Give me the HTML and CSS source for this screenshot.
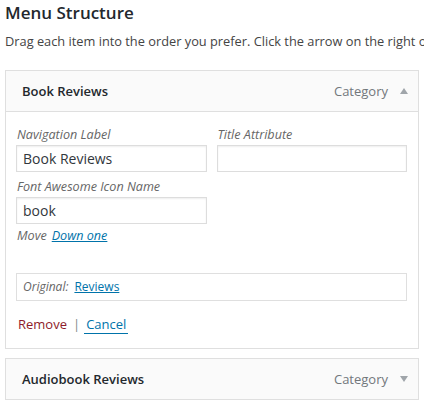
FILE: index.html
```html
<!DOCTYPE html>
<html>
<head>
<meta charset="utf-8">
<link rel="stylesheet" href="styles.css">
</head>
<body>
<h3 class="title">Menu Structure</h3>
<p class="intro">Drag each item into the order you prefer. Click the arrow on the right of the item to reveal additional configuration options.</p>

<div class="item">
  <div class="handle">
    <span class="item-title">Book Reviews</span>
    <span class="controls"><span class="type">Category</span><span class="arrow up"></span></span>
  </div>
  <div class="settings">
    <div class="row">
      <div class="field">
        <label class="label">Navigation Label</label>
        <div class="input">Book Reviews</div>
      </div>
      <div class="field">
        <label class="label">Title Attribute</label>
        <div class="input"></div>
      </div>
    </div>
    <div class="field half">
      <label class="label">Font Awesome Icon Name</label>
      <div class="input">book</div>
    </div>
    <div class="move"><span class="move-label">Move</span><a class="link">Down one</a></div>
    <div class="original"><span class="orig-label">Original:</span><a class="link">Reviews</a></div>
    <div class="actions"><a class="remove">Remove</a><span class="sep">|</span><a class="cancel">Cancel</a></div>
  </div>
</div>

<div class="item">
  <div class="handle closed">
    <span class="item-title">Audiobook Reviews</span>
    <span class="controls"><span class="type">Category</span><span class="arrow down"></span></span>
  </div>
</div>
</body>
</html>
```

FILE: styles.css
```css
* { box-sizing: border-box; }
html, body { margin: 0; padding: 0; background: #fff; }
body {
  padding: 0 5px;
  font-family: "Open Sans", "Liberation Sans", sans-serif;
  color: #23282d;
  overflow: hidden;
  width: 424px;
}
.title {
  margin: 0;
  font-size: 17px;
  line-height: 26px;
  font-weight: 600;
  color: #23282d;
}
.intro {
  margin: 5px 0 0;
  font-size: 12.8px;
  line-height: 20px;
  color: #444;
  white-space: nowrap;
}
.item {
  width: 414px;
  border: 1px solid #dfdfdf;
  margin-top: 19px;
  background: #fff;
}
.item + .item { margin-top: 9px; }
.handle {
  height: 41px;
  background: #fafafa;
  border-bottom: 1px solid #dfdfdf;
  display: flex;
  align-items: center;
  justify-content: space-between;
  padding: 0 10px 0 16px;
}
.handle.closed { border-bottom: 0; height: 40px; }
.item-title {
  font-size: 13px;
  font-weight: 600;
  color: #23282d;
}
.controls { display: flex; align-items: center; }
.type { font-size: 13px; color: #72777c; }
.arrow {
  width: 0; height: 0;
  margin-left: 12px;
  border-left: 4px solid transparent;
  border-right: 4px solid transparent;
}
.arrow.up { border-bottom: 6px solid #a0a5aa; }
.arrow.down { border-top: 6px solid #a0a5aa; }
.settings {
  padding: 13px 11px 14px 10px;
}
.row { display: flex; gap: 10px; }
.field { width: 191px; }
.field.half { margin-top: 5px; }
.label {
  display: block;
  font-size: 12.6px;
  line-height: 20px;
  font-style: italic;
  color: #666;
  padding-left: 1px;
}
.input {
  height: 27px;
  border: 1px solid #ddd;
  box-shadow: inset 0 1px 2px rgba(0,0,0,0.07);
  font-size: 14px;
  line-height: 25px;
  padding-left: 6px;
  color: #32373c;
}
.move {
  margin-top: 2px;
  font-size: 12.6px;
  line-height: 20px;
  font-style: italic;
  color: #666;
  padding-left: 1px;
}
.move-label { margin-right: 5px; }
.link { color: #0073aa; text-decoration: underline; }
.original {
  margin-top: 27px;
  width: 391px;
  height: 28px;
  border: 1px solid #dfdfdf;
  padding-left: 6px;
  font-size: 12px;
  line-height: 26px;
}
.orig-label { font-style: italic; color: #666; margin-right: 6px; }
.actions {
  margin-top: 12px;
  font-size: 13px;
  line-height: 20px;
  padding-left: 2px;
  display: flex;
  align-items: center;
}
.remove { color: #8e1b2b; }
.sep { color: #82878c; margin: 0 4px 0 6px; }
.cancel {
  color: #0073aa;
  padding: 0 2px;
  border-bottom: 1px solid #0073aa;
  line-height: 18px;
  margin-top: 2px;
}
```
